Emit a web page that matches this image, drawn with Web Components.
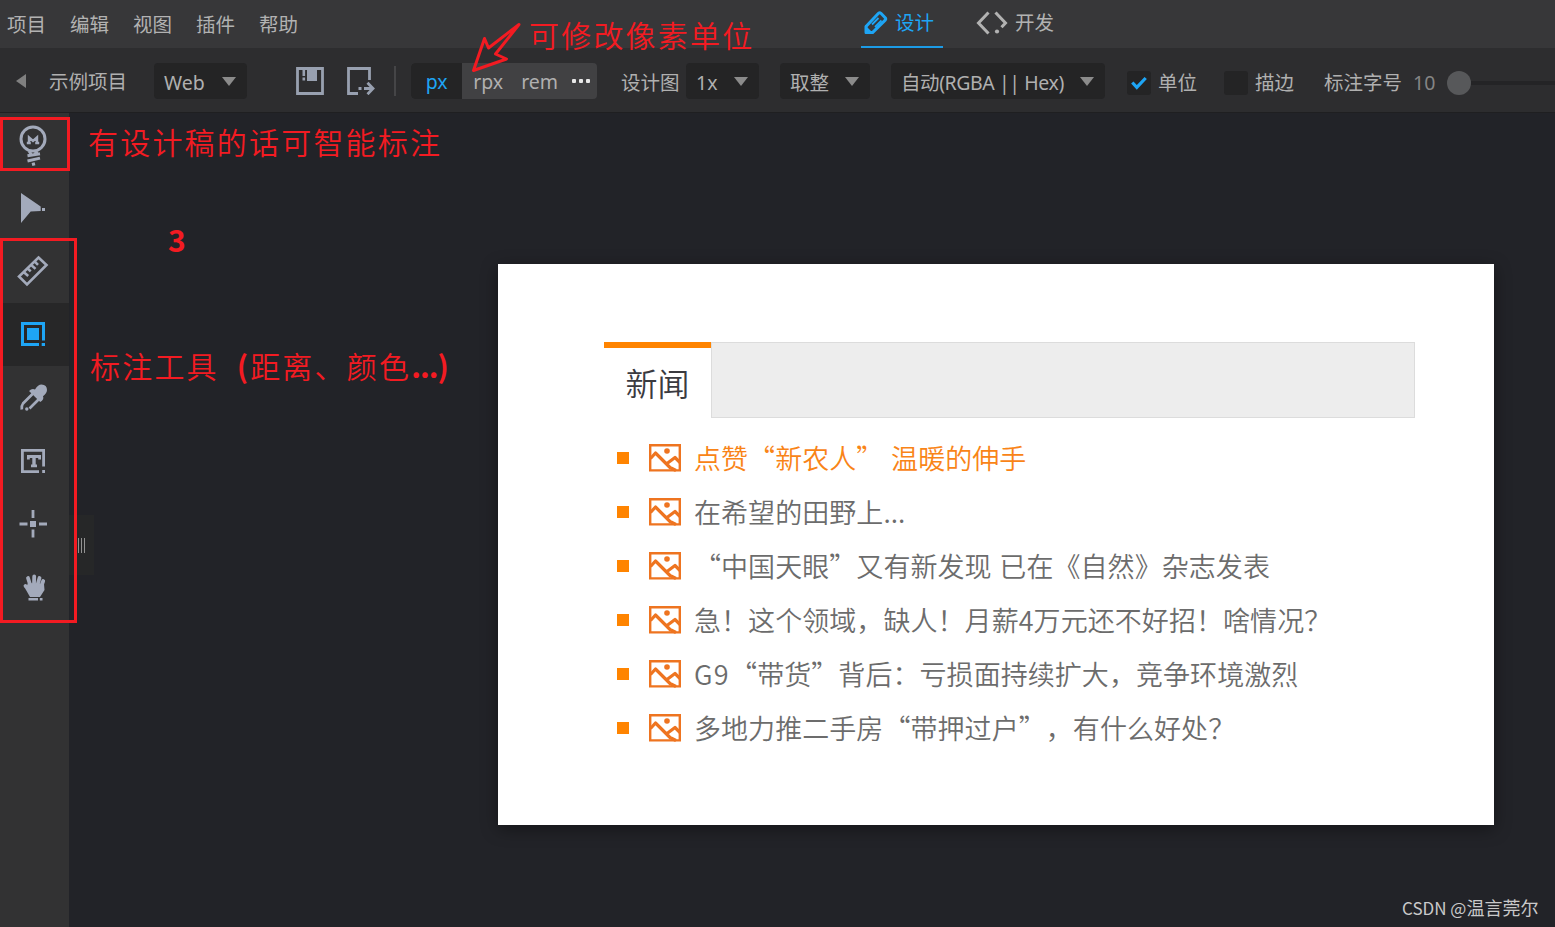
<!DOCTYPE html>
<html lang="zh-CN">
<head>
<meta charset="utf-8">
<title>示例项目</title>
<style>
  html, body { margin: 0; height: 100%; overflow: hidden; background: #222328; }
  body { font-family: "Noto Sans", "Noto Sans CJK SC", sans-serif; }
</style>
</head>
<body>
<mark-app></mark-app>

<script>
const ICONS = {
  save: `<svg width="28" height="28" viewBox="0 0 28 28"><path fill="none" stroke="currentColor" stroke-width="2.8" d="M1.5 1.5h25v25h-25z"/><path fill="currentColor" d="M11 2h10v12H11zM6.5 3h2.6v6H6.5zM6.5 10.5h2.6v3H6.5z"/></svg>`,
  export: `<svg width="28" height="28" viewBox="0 0 28 28"><path fill="none" stroke="currentColor" stroke-width="2.8" d="M22.5 13V1.5h-21v25H11M17 21.5h8M20.5 15.8l5.5 5.7-5.5 5.7"/><path fill="currentColor" d="M11.5 20h3v3h-3z"/></svg>`,
  pencil: `<svg width="24" height="24" viewBox="0 0 24 24"><path fill="none" stroke="currentColor" stroke-width="3" stroke-linejoin="round" d="M2 15.5L14.5 2.3q1.2-1 2.4 0l4.3 4.4q1 1.2 0 2.4L8.5 21.6H2z"/><path fill="none" stroke="currentColor" stroke-width="1.8" d="M8 13.5l6.5-6.5M11 16l6.5-6.5"/><path fill="currentColor" d="M1 14l8.5 8.5H1z"/></svg>`,
  code: `<svg width="32" height="24" viewBox="0 0 32 24"><path fill="none" stroke="currentColor" stroke-width="3" d="M12.5 1.5L2.5 12l10 10.5M19.5 1.5L29.5 12l-4 4.3"/><circle cx="21" cy="20.5" r="2.1" fill="currentColor"/></svg>`,
  bulb: `<svg width="34" height="44" viewBox="0 0 34 44"><circle cx="17" cy="16" r="12" fill="none" stroke="currentColor" stroke-width="3"/><path fill="none" stroke="currentColor" stroke-width="2.4" d="M13 20.500v-6l4 3.500 4-3.500v6M10.800 20h4M19.200 20h4"/><path fill="none" stroke="currentColor" stroke-width="3" d="M13 28l2 3M21 28l-2 3M11.500 32.800L24 30.800M11.500 38L24 35.100M16 41.500l3-.8"/></svg>`,
  cursor: `<svg width="34" height="34" viewBox="0 0 34 34"><path fill="currentColor" d="M5 2l19.700 13.500V20l-10 .5L5 32zM26 17h3v3h-3z"/></svg>`,
  ruler: `<svg width="34" height="34" viewBox="0 0 34 34"><path fill="none" stroke="currentColor" stroke-width="2.6" d="M22.5 3.5l8 7.5L11 30.500l-8-8zM8.200 18.500l4 3.500M12 14.800l2.700 2.600M15.500 11.300l4 3.600M19 7.800l3 3"/></svg>`,
  rect: `<svg width="34" height="34" viewBox="0 0 34 34"><path fill="none" stroke="currentColor" stroke-width="3" d="M23 27.500H6.500v-21h21V23.500"/><path fill="currentColor" d="M11 11h12v12H11zM25.700 26h3.300v3h-3.300z"/></svg>`,
  dropper: `<svg width="34" height="34" viewBox="0 0 34 34"><path fill="currentColor" d="M13 11q3-3 6-1.500Q22 4.500 25.500 4.500q5.500.2 5.500 5.500-.2 3.500-4 6.200 1.500 3-2.800 5.800z"/><path fill="none" stroke="currentColor" stroke-width="2.700" d="M17 13.500L7 23.500q-1.700 2-1.200 6M23 19l-9.500 9.500"/><circle cx="10.800" cy="29" r="1.700" fill="currentColor"/></svg>`,
  text: `<svg width="34" height="34" viewBox="0 0 34 34"><path fill="none" stroke="currentColor" stroke-width="2.800" d="M23 27.600H6.400V6.400h21.200V22.500M12.400 15.500v-3h11.200v3M15 21.800h6"/><path fill="currentColor" d="M26.200 26h2.800v3h-2.800zM16.300 12h3.400v10h-3.400z"/></svg>`,
  cross: `<svg width="34" height="34" viewBox="0 0 34 34"><path fill="none" stroke="currentColor" stroke-width="2.800" d="M17 3v8M17 22.500v8M3.500 17h8M23 17h8"/><path fill="currentColor" d="M14 14h6v6h-6z"/></svg>`,
  hand: `<svg width="34" height="34" viewBox="0 0 34 34"><g fill="none" stroke="currentColor" stroke-width="3.800" stroke-linecap="round"><path d="M14.500 16L12 8M18 15l.2-8.500M21.500 15l2-7M25 17l2.200-6M14 21l-4.500-5"/></g><path fill="currentColor" d="M12 13l16 1 .5 6-4.500 7H14L9.500 19zM12.500 28h9.500v2.600h-9.500zM23.800 28h2.700v2.600h-2.700z"/></svg>`,
  picture: `<svg width="32" height="28" viewBox="0 0 32 28"><path fill="none" stroke="currentColor" stroke-width="2.400" d="M1.200 1.200h29.600v25.200H1.200z"/><path fill="none" stroke="currentColor" stroke-width="3.200" stroke-linejoin="round" d="M1.500 14.500L6.500 9l15.500 15.500M18 19.500l8-6 5 5M22 24l5 2.500"/><circle cx="18" cy="7" r="2.800" fill="currentColor"/></svg>`,
  check: `<svg width="16" height="14" viewBox="0 0 16 14"><path fill="none" stroke="currentColor" stroke-width="3.200" d="M1.300 6.500l4.500 4.800L14.700 2"/></svg>`,
};

// Base class: renders the markup returned by template() once
class MarkElement extends HTMLElement {
  constructor() {
    super();
    this.attachShadow({ mode: 'open' });
  }

  connectedCallback() {
    this.shadowRoot.innerHTML = this.template();
  }
}

class MarkIcon extends MarkElement {
  template() {
    return `
      <style>
        :host { display: block; flex: none; }
        svg { display: block; }
      </style>
      ${ICONS[this.getAttribute('name')]}
    `;
  }
}

class MarkSelect extends MarkElement {
  template() {
    return `
      <style>
        :host {
          display: flex;
          align-items: center;
          justify-content: space-between;
          box-sizing: border-box;
          flex: none;
          height: 36px;
          padding: 4px 11px 0 10px;
          border-radius: 4px;
          background: #242425;
          white-space: nowrap;
        }
        i {
          border: solid transparent;
          border-width: 9px 7.5px 0;
          border-top-color: #8b8b8b;
          margin-bottom: 4px;
        }
      </style>
      <slot></slot><i></i>
    `;
  }
}

class MarkCheckbox extends MarkElement {
  template() {
    return `
      <style>
        :host { display: flex; align-items: center; gap: 7px; flex: none; padding-top: 3px; }
        div {
          display: grid;
          place-items: center;
          width: 24px;
          height: 24px;
          border-radius: 3px;
          background: #242425;
          color: #1ea5f5;
        }
      </style>
      <div>${this.hasAttribute('checked') ? '<mark-icon name="check"></mark-icon>' : ''}</div>
      <slot></slot>
    `;
  }
}

class MarkMenubar extends MarkElement {
  template() {
    return `
      <style>
        :host {
          display: flex;
          box-sizing: border-box;
          height: 48px;
          padding-left: 7px;
          background: #373739;
          color: #b2b2b2;
          font-size: 19.5px;
          line-height: 49px;
          white-space: nowrap;
        }
        nav { display: flex; gap: 24px; width: 854px; }
        .tabs { display: flex; gap: 30px; }
        .tab {
          display: flex;
          align-items: center;
          gap: 7px;
          box-sizing: border-box;
          height: 48px;
          padding: 0 9px 2px 3px;
          line-height: 44px;
        }
        .on { color: #1ea5f5; border-bottom: 2px solid #1c9be6; padding-bottom: 0; }
      </style>
      <nav><span>项目</span><span>编辑</span><span>视图</span><span>插件</span><span>帮助</span></nav>
      <div class="tabs">
        <div class="tab on"><mark-icon name="pencil"></mark-icon><span>设计</span></div>
        <div class="tab"><mark-icon name="code"></mark-icon><span>开发</span></div>
      </div>
    `;
  }
}

class MarkToolbar extends MarkElement {
  template() {
    return `
      <style>
        :host {
          display: flex;
          align-items: center;
          box-sizing: border-box;
          height: 65px;
          padding: 2px 0 0 16px;
          border-bottom: 1px solid #1f1f21;
          background: #2d2d2f;
          color: #b0b0b0;
          font-size: 19.5px;
          line-height: 36px;
          white-space: nowrap;
          overflow: hidden;
        }
        :host > * { flex: none; }
        .back {
          border: solid transparent;
          border-width: 7px 10px 7px 0;
          border-right-color: #808080;
        }
        .label { padding-top: 3px; }
        .name { width: 105px; margin-left: 23px; padding-top: 1px; }
        .icon { color: #98a0b0; }
        .divider { width: 2px; height: 30px; margin: 0 15px 0 19px; background: #454547; }
        .units {
          display: flex;
          width: 186px;
          height: 36px;
          border-radius: 4px;
          background: #414143;
          line-height: 38px;
          overflow: hidden;
        }
        .units span { width: 52px; text-align: center; }
        .units .on { background: #242425; color: #1ea5f5; }
        .units .more { width: 32px; display: flex; align-items: center; justify-content: center; gap: 3px; }
        .more i { width: 4px; height: 4px; border-radius: 1px; background: #e8e8e8; }
        .knob { width: 24px; height: 24px; margin-top: 3px; border-radius: 50%; background: #57585a; }
        .track { flex: 1; height: 4px; margin-top: 3px; background: #242426; }
      </style>
      <div class="back"></div>
      <span class="label name">示例项目</span>
      <mark-select style="width:93px">Web</mark-select>
      <mark-icon class="icon" name="save" style="margin-left:49px"></mark-icon>
      <mark-icon class="icon" name="export" style="margin-left:23px"></mark-icon>
      <div class="divider"></div>
      <div class="units">
        <span class="on">px</span><span>rpx</span><span>rem</span>
        <div class="more"><i></i><i></i><i></i></div>
      </div>
      <span class="label" style="width:65px;margin-left:24px">设计图</span>
      <mark-select style="width:73px">1x</mark-select>
      <mark-select style="width:90px;margin-left:21px">取整</mark-select>
      <mark-select style="width:214px;margin-left:21px;letter-spacing:-.42px">自动(RGBA || Hex)</mark-select>
      <mark-checkbox checked style="width:97px;margin-left:22px">单位</mark-checkbox>
      <mark-checkbox style="width:100px">描边</mark-checkbox>
      <span class="label" style="width:89px">标注字号</span>
      <span class="label" style="width:34px;color:#858585">10</span>
      <div class="knob"></div>
      <div class="track"></div>
    `;
  }
}

class MarkTools extends MarkElement {
  template() {
    const tools = ['bulb', 'cursor', 'ruler', 'rect', 'dropper', 'text', 'cross', 'hand'];
    return `
      <style>
        :host {
          display: flex;
          flex-direction: column;
          flex: none;
          width: 69px;
          background: #323233;
          color: #a3aabb;
        }
        div {
          display: flex;
          align-items: center;
          box-sizing: border-box;
          height: 63.2px;
          padding-left: 16px;
        }
        .on { background: #272728; color: #1ea5f5; }
      </style>
      ${tools.map(name => `<div class="${name === 'rect' ? 'on' : ''}"><mark-icon name="${name}"></mark-icon></div>`).join('')}
    `;
  }
}

class NewsItem extends MarkElement {
  template() {
    return `
      <style>
        :host {
          display: flex;
          align-items: center;
          height: 54px;
          color: #6c6c6c;
          font: 350 27px/54px "Noto Sans CJK SC", sans-serif;
          letter-spacing: .06px;
          word-spacing: 1.6px;
          text-spacing-trim: space-all;
          white-space: nowrap;
        }
        :host([active]) { color: #f98417; }
        i { width: 12px; height: 12px; margin-right: 20px; background: #ff8400; }
        mark-icon { margin-right: 13px; color: #ee7420; }
      </style>
      <i></i><mark-icon name="picture"></mark-icon><span><slot></slot></span>
    `;
  }
}

class NewsCard extends MarkElement {
  template() {
    return `
      <style>
        :host {
          display: block;
          box-sizing: border-box;
          width: 996px;
          height: 561px;
          padding: 78px 79px 0 106px;
          background: #fff;
          box-shadow: 0 4px 16px rgba(0, 0, 0, .4);
        }
        header { display: flex; height: 76px; }
        h2 {
          box-sizing: border-box;
          width: 107px;
          margin: 0;
          border-top: 6px solid #ff8400;
          color: #3a3a3f;
          font: 350 32px/69px "Noto Sans CJK SC", sans-serif;
          text-align: center;
        }
        .bar { flex: 1; border: 1px solid #dcdcdc; background: #ededed; }
        section { padding: 13px 0 0 13px; }
      </style>
      <header><h2>新闻</h2><div class="bar"></div></header>
      <section><slot></slot></section>
    `;
  }
}

// Red note placed over the workspace
class RedNote extends MarkElement {
  template() {
    return `
      <style>
        :host {
          position: absolute;
          color: #f31b22;
          font: 350 30px/36px "Noto Sans CJK SC", sans-serif;
          letter-spacing: 2.2px;
          white-space: nowrap;
        }
        :host([frame]) { box-sizing: border-box; border: 3px solid #f31b22; }
      </style>
      <slot></slot>
    `;
  }
}

class MarkApp extends MarkElement {
  template() {
    return `
      <style>
        :host {
          display: flex;
          flex-direction: column;
          position: relative;
          height: 927px;
          overflow: hidden;
        }
        main { display: flex; flex: 1; }
        news-card { position: absolute; left: 498px; top: 264px; }
        .handle {
          display: flex;
          align-items: center;
          justify-content: center;
          align-self: flex-start;
          gap: 2px;
          width: 25px;
          height: 60px;
          margin-top: 402px;
          background: #262728;
        }
        .handle i { width: 1.3px; height: 15px; background: #929292; }
        .arrow { position: absolute; left: 466px; top: 18px; }
        b { font-weight: 700; }
        .credit {
          position: absolute;
          left: 1402px;
          top: 894px;
          color: #c9c9ca;
          font: 17px/26px "Noto Sans CJK SC", sans-serif;
          white-space: nowrap;
        }
        .credit span { font-size: 18px; }
      </style>
      <mark-menubar></mark-menubar>
      <mark-toolbar></mark-toolbar>
      <main>
        <mark-tools></mark-tools>
        <div class="handle"><i></i><i></i><i></i></div>
      </main>
      <news-card>
        <news-item active>点赞“新农人” 温暖的伸手</news-item>
        <news-item>在希望的田野上...</news-item>
        <news-item>“中国天眼”又有新发现 已在《自然》杂志发表</news-item>
        <news-item>急！这个领域，缺人！月薪4万元还不好招！啥情况？</news-item>
        <news-item><span style="letter-spacing:1.4px">G9</span>“带货”背后：亏损面持续扩大，竞争环境激烈</news-item>
        <news-item>多地力推二手房“带押过户”，有什么好处？</news-item>
      </news-card>

      <red-note frame style="left:0;top:117px;width:70px;height:54px"></red-note>
      <red-note frame style="left:0;top:238px;width:77px;height:385px"></red-note>
      <red-note style="left:529px;top:16px">可修改像素单位</red-note>
      <red-note style="left:88px;top:123px">有设计稿的话可智能标注</red-note>
      <red-note style="left:168px;top:221px"><b>3</b></red-note>
      <red-note style="left:90px;top:347px">标注工具<b style="margin-left:18px;letter-spacing:2px">(</b>距离、颜色<b style="letter-spacing:-1px">...)</b></red-note>
      <svg class="arrow" width="58" height="58" viewBox="466 18 58 58" fill="none" stroke="#f31b22" stroke-width="3" stroke-linejoin="round"><path d="M473.500 70.500L484.500 38.500l4 9.500L519 24.500l-23.500 29.500 11 5z"/></svg>
      <div class="credit">CSDN @<span>温言莞尔</span></div>
    `;
  }
}

customElements.define('mark-icon', MarkIcon);
customElements.define('mark-select', MarkSelect);
customElements.define('mark-checkbox', MarkCheckbox);
customElements.define('mark-menubar', MarkMenubar);
customElements.define('mark-toolbar', MarkToolbar);
customElements.define('mark-tools', MarkTools);
customElements.define('news-item', NewsItem);
customElements.define('news-card', NewsCard);
customElements.define('red-note', RedNote);
customElements.define('mark-app', MarkApp);
</script>
</body>
</html>
